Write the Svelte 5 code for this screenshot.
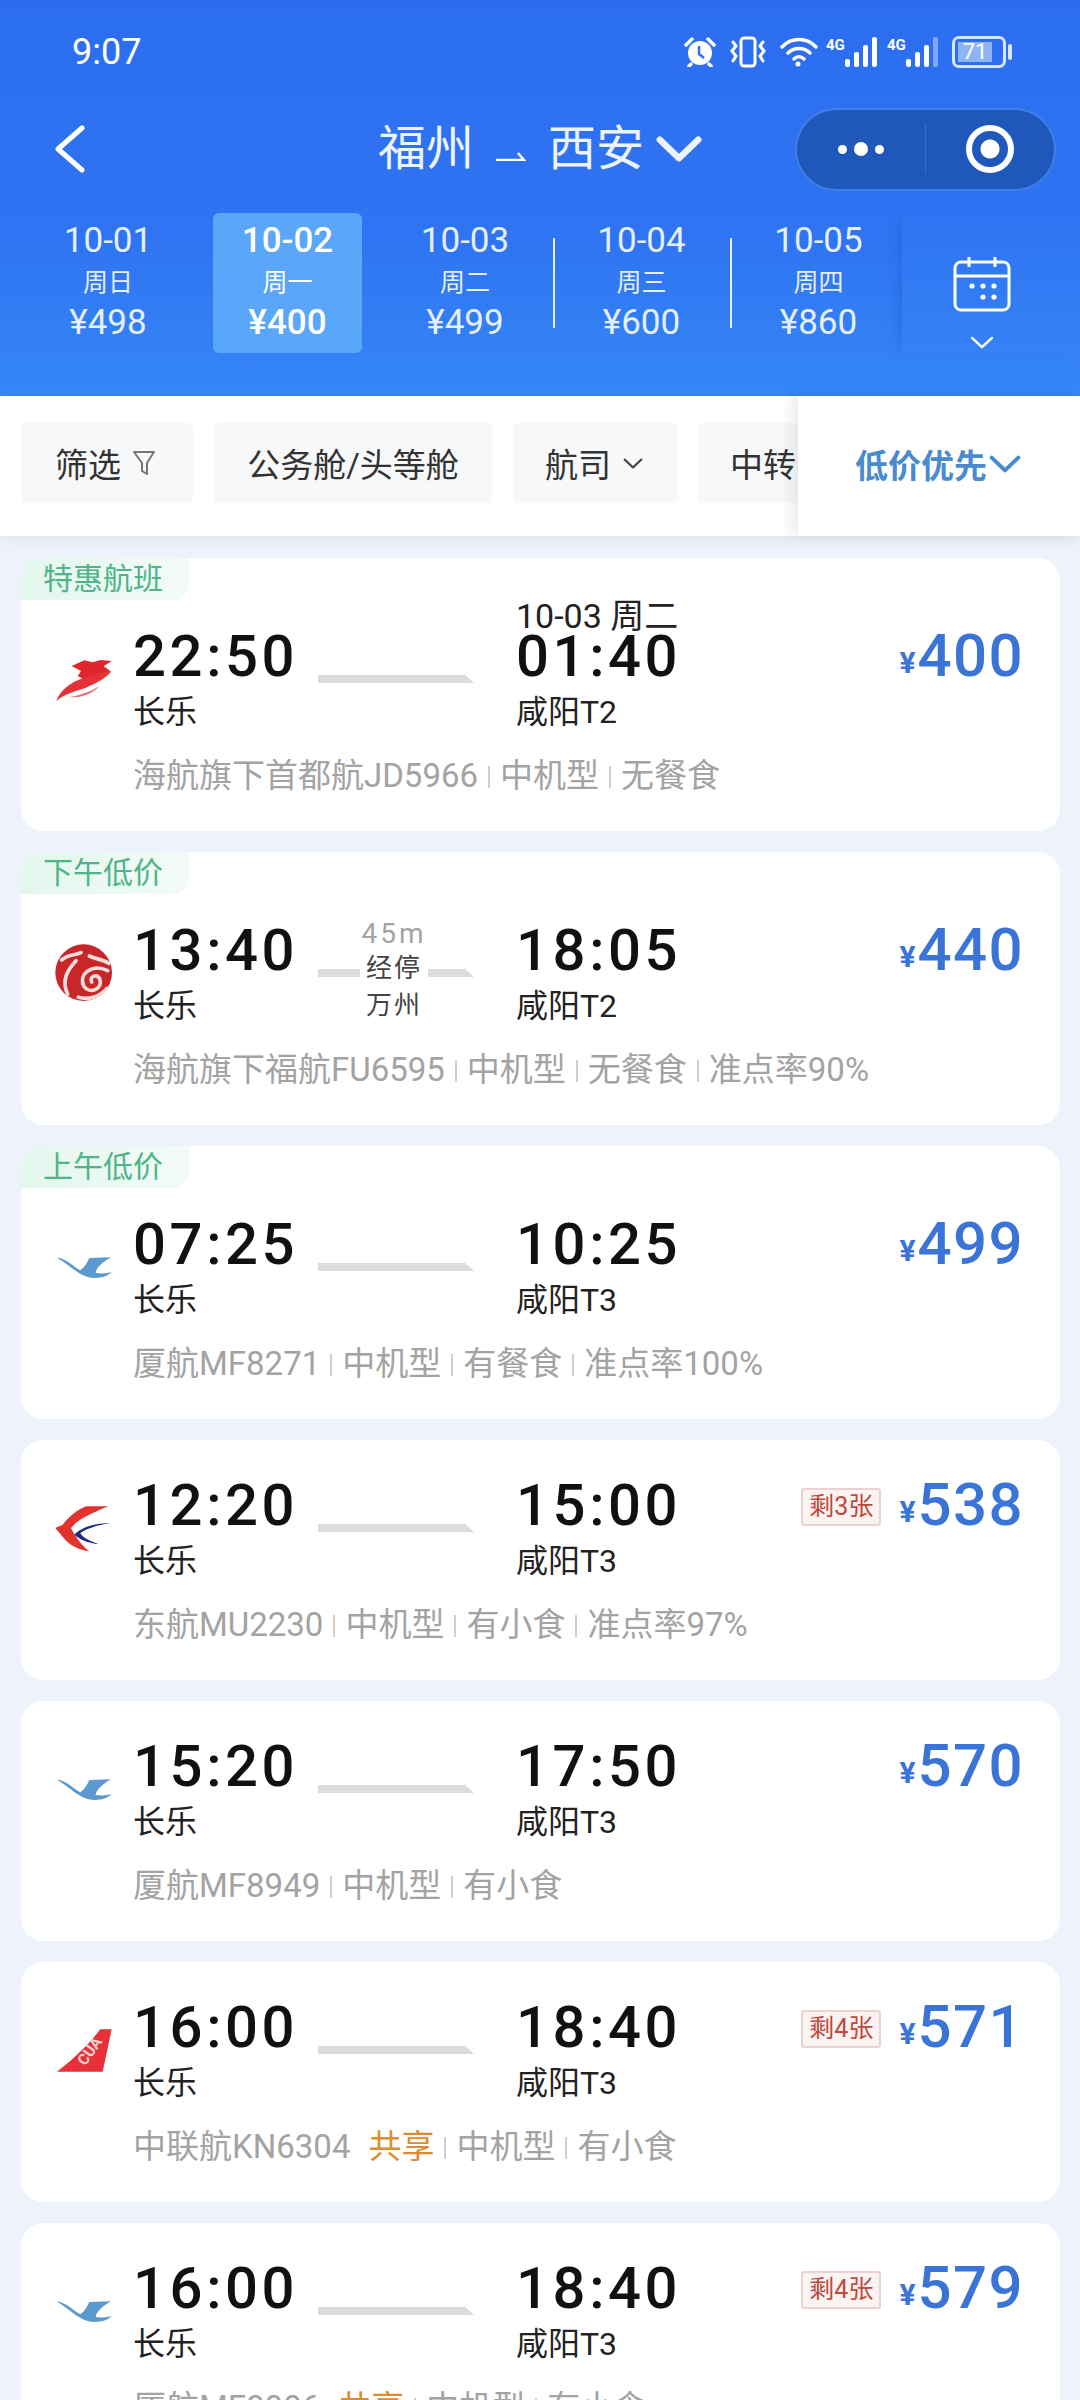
<script>
	const days = [
		{ date: "10-01", week: "周日", price: "¥498" },
		{ date: "10-02", week: "周一", price: "¥400", active: true },
		{ date: "10-03", week: "周二", price: "¥499", narrow: true },
		{ date: "10-04", week: "周三", price: "¥600", sep: true },
		{ date: "10-05", week: "周四", price: "¥860", sep: true }
	];

	const flights = [
		{ tag: "特惠航班", logo: "dragon", dep: "22:50", arr: "01:40", arrDate: "10-03 周二", to: "咸阳T2", price: 400, name: "海航旗下首都航JD5966", info: ["中机型", "无餐食"] },
		{ tag: "下午低价", logo: "fu", dep: "13:40", arr: "18:05", to: "咸阳T2", price: 440, stop: true, name: "海航旗下福航FU6595", info: ["中机型", "无餐食", "准点率90%"] },
		{ tag: "上午低价", logo: "xm", dep: "07:25", arr: "10:25", to: "咸阳T3", price: 499, name: "厦航MF8271", info: ["中机型", "有餐食", "准点率100%"] },
		{ logo: "east", dep: "12:20", arr: "15:00", to: "咸阳T3", price: 538, left: "剩3张", name: "东航MU2230", info: ["中机型", "有小食", "准点率97%"] },
		{ logo: "xm", dep: "15:20", arr: "17:50", to: "咸阳T3", price: 570, name: "厦航MF8949", info: ["中机型", "有小食"] },
		{ logo: "cua", dep: "16:00", arr: "18:40", to: "咸阳T3", price: 571, left: "剩4张", name: "中联航KN6304", shared: true, info: ["中机型", "有小食"] },
		{ logo: "xm", dep: "16:00", arr: "18:40", to: "咸阳T3", price: 579, left: "剩4张", name: "厦航MF8006", shared: true, info: ["中机型", "有小食"] }
	];
</script>

{#snippet chevron(w, h, sw)}
	<svg width={w} height={h} viewBox="0 0 24 14" preserveAspectRatio="none" fill="none" stroke="currentColor" stroke-width={sw} stroke-linecap="round" stroke-linejoin="round">
		<path d="M2 2 L12 12 L22 2" />
	</svg>
{/snippet}

{#snippet line()}
	<svg class="line" width="156" height="9" viewBox="0 0 156 9"><polygon points="0,1 146,1 146,0 156,9 0,9" fill="#dcdcdc" /></svg>
{/snippet}

{#snippet logo(kind)}
	{#if kind === "dragon"}
		<svg class="logo" width="60" height="60" viewBox="96 84 180 180">
			<path fill="#e0262c" d="M152 135 L190 118 L215 124 L240 117 L272 120 L248 136 L268 150 L228 170 L195 178 L170 165 L180 150 Z" />
			<path fill="#e53238" d="M106 240 C125 190 180 165 272 150 C250 178 215 190 195 200 C165 210 130 218 106 240 Z" />
			<path fill="#ee6a6c" d="M145 228 C175 224 205 214 235 195 C215 218 180 232 145 228 Z" />
		</svg>
	{:else if kind === "fu"}
		<svg class="logo" width="60" height="60" viewBox="96 69 180 180">
			<circle cx="188" cy="158" r="85" fill="#c9262a" />
			<g fill="none" stroke="#f9ddd8" stroke-width="11" stroke-linecap="round">
				<path d="M122 120 C145 100 160 108 180 98" />
				<path d="M165 122 C140 150 120 180 140 222" />
				<path d="M205 108 C225 118 245 118 264 130" />
				<path d="M260 152 C215 130 172 160 188 198 C205 224 248 208 236 176 C226 160 204 170 212 186" />
				<path d="M172 232 C200 240 235 232 258 205" />
			</g>
		</svg>
	{:else if kind === "xm"}
		<svg class="logo" width="60" height="60" viewBox="96 20 180 180">
			<path fill="#5a9ad0" d="M108 82 C130 82 150 102 178 120 C190 112 198 98 205 83 L270 81 C245 95 225 113 224 128 C240 130 255 130 272 126 C255 142 225 147 200 140 C170 132 140 100 108 82 Z" />
		</svg>
	{:else if kind === "east"}
		<svg class="logo" width="60" height="60" viewBox="96 50 180 180">
			<path fill="#e1332d" d="M195 75 L262 75 C215 95 175 110 150 140 C165 170 185 195 205 210 C175 205 150 195 130 172 L103 140 L125 130 C145 105 170 85 195 75 Z" />
			<path fill="#1d2a86" d="M270 125 C225 125 185 135 160 160 C180 178 205 185 232 188 C205 178 185 170 178 155 C200 140 235 130 270 125 Z" />
		</svg>
	{:else}
		<svg class="logo" width="60" height="60" viewBox="96 30 180 180">
			<path fill="#e8303a" d="M238 58 L272 58 L245 185 L108 185 C140 160 190 120 238 58 Z" />
			<text x="208" y="138" transform="rotate(-55 208 125)" text-anchor="middle" font-size="46" font-weight="700" font-family="Roboto, sans-serif" fill="#fbd5d5">CUA</text>
		</svg>
	{/if}
{/snippet}

<div class="page">
	<header>
		<div class="status">
			<span class="clock">9:07</span>
			<div class="status-icons">
				<svg width="32" height="30" viewBox="0 0 32 30">
					<circle cx="16" cy="16" r="12" fill="#fff" />
					<path d="M2 8 L8 2 M30 8 L24 2 M7 27 L5 29 M25 27 L27 29" stroke="#fff" stroke-width="3.5" stroke-linecap="round" />
					<path d="M15 9 V17 L20 21" stroke="#2d6ff0" stroke-width="2.5" fill="none" />
				</svg>
				<svg class="vib" width="40" height="32" viewBox="0 0 38 32" fill="none" stroke="#fff" stroke-width="3" stroke-linecap="round">
					<rect x="12" y="2" width="14" height="28" rx="3" />
					<path d="M4 6 L7 10 L3 15 L7 20 L4 25 M34 6 L31 10 L35 15 L31 20 L34 25" />
				</svg>
				<svg class="wifi" width="38" height="32" viewBox="0 0 38 32" fill="none" stroke="#fff" stroke-width="3.4" stroke-linecap="round">
					<path d="M2 11 C11 1 27 1 36 11 M8 17 C14 11 24 11 30 17 M14 23 C17 20 21 20 24 23" />
					<circle cx="18" cy="28" r="2.5" fill="#fff" stroke="none" />
				</svg>
				<div class="signal">
					<span class="g4">4G</span>
					<svg width="34" height="32" viewBox="0 0 34 32" fill="#fff"><rect x="0" y="23" width="5" height="8" rx="2" /><rect x="9" y="16" width="5" height="15" rx="2" /><rect x="18" y="9" width="5" height="22" rx="2" /><rect x="27" y="1" width="5" height="30" rx="2" /></svg>
				</div>
				<div class="signal">
					<span class="g4">4G</span>
					<svg width="34" height="32" viewBox="0 0 34 32" fill="#fff"><rect x="0" y="23" width="5" height="8" rx="2" /><rect x="9" y="16" width="5" height="15" rx="2" /><rect x="18" y="9" width="5" height="22" rx="2" /><rect x="27" y="1" width="5" height="30" rx="2" opacity=".4" /></svg>
				</div>
				<div class="battery"><span class="level">71</span></div>
				<span class="tip"></span>
			</div>
		</div>

		<nav>
			<svg class="back" width="34" height="48" viewBox="0 0 34 48" fill="none" stroke="#fff" stroke-width="5" stroke-linecap="round" stroke-linejoin="round"><path d="M29 3 L5 24 L29 45" /></svg>
			<div class="title">
				<span>福州</span>
				<svg class="arrow" width="30" height="10" viewBox="0 0 30 10" fill="none" stroke="#fff" stroke-width="2.5"><path d="M0 9 H28 L22 2" /></svg>
				<span>西安</span>
				<span class="title-chev">{@render chevron(46, 26, 3.4)}</span>
			</div>
			<div class="capsule">
				<div class="dots"><i></i><i class="big"></i><i></i></div>
				<span class="divider"></span>
				<div class="target"><i></i></div>
			</div>
		</nav>

		<div class="dates">
			<div class="days">
				{#each days as d}
					<div class="day" class:active={d.active} class:sep={d.sep} class:narrow={d.narrow}>
						<span class="d">{d.date}</span>
						<span class="w">{d.week}</span>
						<span class="d">{d.price}</span>
					</div>
				{/each}
			</div>
			<div class="cal">
				<svg width="58" height="56" viewBox="0 0 58 56" fill="none" stroke="#fff" stroke-width="3">
					<rect x="2" y="6" width="54" height="48" rx="6" />
					<path d="M2 20 H56 M16 1 V11 M42 1 V11" />
					<g fill="#fff" stroke="none">
						<circle cx="19" cy="30" r="2.6" /><circle cx="30" cy="30" r="2.6" /><circle cx="41" cy="30" r="2.6" />
						<circle cx="30" cy="41" r="2.6" /><circle cx="41" cy="41" r="2.6" />
					</g>
				</svg>
				<span class="cal-chev">{@render chevron(24, 13, 2.4)}</span>
			</div>
		</div>
	</header>

	<div class="filters">
		<div class="chips">
			<div class="chip first">筛选
				<svg width="22" height="26" viewBox="0 0 22 26" fill="none" stroke="#777" stroke-width="2" stroke-linejoin="round"><path d="M1 2 H21 L14 13 V24 L9 21 V13 Z" /></svg>
			</div>
			<div class="chip wide">公务舱/头等舱</div>
			<div class="chip airline">航司 <span class="chip-chev">{@render chevron(20, 11, 2.6)}</span></div>
			<div class="chip">中转</div>
		</div>
		<div class="sort">低价优先 <span class="sort-chev">{@render chevron(32, 18, 3)}</span></div>
	</div>

	<main>
		{#each flights as f}
			<section class="card" class:tagged={f.tag}>
				{#if f.tag}<div class="tag">{f.tag}</div>{/if}
				<div class="row">
					{@render logo(f.logo)}
					<div class="dep">
						<div class="time">{f.dep}</div>
						<div class="port">长乐</div>
					</div>
					<div class="mid">
						{#if f.stop}
							<svg class="line" width="42" height="9"><rect y="1" width="42" height="8" fill="#dcdcdc" /></svg>
							<div class="via">
								<span class="dur">45m</span>
								<span>经停</span>
								<span>万州</span>
							</div>
							<svg class="line" width="46" height="9" viewBox="0 0 46 9"><polygon points="0,1 36,1 36,0 46,9 0,9" fill="#dcdcdc" /></svg>
						{:else}
							{@render line()}
						{/if}
					</div>
					<div class="arr">
						{#if f.arrDate}<div class="next-day">{f.arrDate}</div>{/if}
						<div class="time">{f.arr}</div>
						<div class="port">{f.to}</div>
					</div>
					{#if f.left}<div class="left">{f.left}</div>{/if}
					<div class="price"><small>¥</small>{f.price}</div>
				</div>
				<div class="meta">
					<span>{f.name}</span>
					{#if f.shared}<span class="shared">共享</span>{/if}
					{#each f.info as item}
						<i class="bar"></i><span>{item}</span>
					{/each}
				</div>
			</section>
		{/each}
	</main>
</div>

<style>
	:global(body) {
		margin: 0;
		background: #edf2fb;
	}

	.page {
		width: 1080px;
		height: 2400px;
		overflow: hidden;
		font-family: Roboto, "Noto Sans CJK SC", sans-serif;
		background: #edf2fb;
	}

	header {
		height: 396px;
		background: linear-gradient(#2c6df0, #2f74f2 60%, #3586f6);
		color: #fff;
	}

	.status {
		height: 104px;
		display: flex;
		align-items: center;
		padding: 0 68px 0 72px;
	}

	.clock {
		font-size: 36px;
	}

	.status-icons {
		margin-left: auto;
		display: flex;
		align-items: center;
	}

	.vib {
		margin-left: 12px;
	}

	.wifi {
		margin-left: 12px;
	}

	.signal {
		display: flex;
		align-items: flex-start;
		margin-left: 8px;
		height: 32px;
	}

	.g4 {
		font-size: 15px;
		line-height: 18px;
		font-weight: 700;
		width: 19px;
	}

	.battery {
		margin-left: 12px;
		width: 54px;
		height: 32px;
		box-sizing: border-box;
		border: 3px solid #d6e6ff;
		border-radius: 7px;
		padding: 3px;
	}

	.level {
		display: block;
		width: 34px;
		height: 20px;
		background: #8fb4f5;
		font-size: 22px;
		line-height: 20px;
		text-align: center;
	}

	.tip {
		width: 4px;
		height: 16px;
		margin-left: 2px;
		border-radius: 2px;
		background: #d6e6ff;
	}

	nav {
		height: 90px;
		display: flex;
		align-items: center;
	}

	.back {
		margin-left: 53px;
	}

	.title {
		margin-left: 291px;
		display: flex;
		align-items: center;
		font-size: 48px;
		line-height: 60px;
		color: #eef4ff;
	}

	.arrow {
		margin: 14px 22px 0 22px;
	}

	.title-chev {
		display: flex;
		margin-left: 12px;
	}

	.capsule {
		margin-left: auto;
		margin-right: 24px;
		width: 261px;
		height: 83px;
		box-sizing: border-box;
		border: 2px solid #3f7fe8;
		border-radius: 42px;
		background: #1f58ba;
		display: flex;
		align-items: center;
	}

	.dots {
		width: 128px;
		display: flex;
		justify-content: center;
		align-items: center;
		gap: 7px;
	}

	.dots i {
		width: 9px;
		height: 9px;
		border-radius: 50%;
		background: #fff;
	}

	.dots i.big {
		width: 14px;
		height: 14px;
	}

	.divider {
		width: 1px;
		height: 50px;
		background: #3a70cc;
	}

	.target {
		flex: 1;
		display: flex;
		justify-content: center;
	}

	.target i {
		width: 48px;
		height: 48px;
		box-sizing: border-box;
		border: 6px solid #fff;
		border-radius: 50%;
		display: flex;
		background: radial-gradient(circle, #fff 0 9px, transparent 10px);
	}

	.dates {
		margin-top: 19px;
		height: 140px;
		display: flex;
	}

	.days {
		width: 902px;
		box-sizing: border-box;
		padding-left: 19px;
		display: flex;
		overflow: hidden;
	}

	.day {
		width: 178px;
		flex: none;
		display: flex;
		flex-direction: column;
		align-items: center;
		color: #e6efff;
		padding-top: 8px;
		box-sizing: border-box;
	}

	.day.narrow {
		width: 176px;
	}

	.day.sep {
		width: 177px;
		background: linear-gradient(#e6efff, #e6efff) left 0 center / 2px 90px no-repeat;
	}

	.day.active {
		width: 149px;
		margin: 0 15px 0 16px;
		background: #5aa6f8;
		border-radius: 6px;
		color: #fff;
	}

	.d {
		font-size: 35px;
		line-height: 40px;
		font-weight: 400;
	}

	.active .d {
		font-weight: 500;
	}

	.w {
		font-size: 25px;
		line-height: 41px;
		padding-top: 1px;
	}

	.cal {
		flex: 1;
		background: linear-gradient(#2f73f2, #3482f5);
		box-shadow: -10px 0 12px -8px rgba(25, 70, 170, 0.3);
		display: flex;
		flex-direction: column;
		align-items: center;
		padding: 43px 18px 0 0;
		box-sizing: border-box;
		height: 140px;
	}

	.cal-chev {
		display: flex;
		margin-top: 24px;
	}

	.filters {
		height: 140px;
		background: #fff;
		display: flex;
		box-shadow: 0 6px 14px rgba(60, 80, 130, 0.06);
		position: relative;
	}

	.chips {
		width: 798px;
		padding: 27px 0 0 21px;
		box-sizing: border-box;
		display: flex;
		gap: 21px;
		overflow: hidden;
	}

	.chip {
		flex: none;
		height: 80px;
		box-sizing: border-box;
		padding: 0 32px;
		background: #f7f8f9;
		display: flex;
		align-items: center;
		font-size: 33px;
		color: #333;
		border-radius: 4px;
	}

	.chip.first {
		width: 172px;
		padding-left: 34px;
		gap: 12px;
	}

	.chip.wide {
		width: 278px;
		justify-content: center;
		padding: 0;
	}

	.chip.airline {
		width: 164px;
	}

	.chip-chev {
		display: flex;
		color: #444;
		margin-left: 12px;
	}

	.sort {
		flex: 1;
		box-shadow: -8px 0 12px rgba(0, 0, 0, 0.07);
		padding: 0 0 4px 57px;
		display: flex;
		align-items: center;
		font-size: 33px;
		font-weight: 700;
		color: #4a8bd0;
		background: #fff;
	}

	.sort-chev {
		display: flex;
		margin-left: 2px;
	}

	main {
		padding: 22px 20px 0 21px;
		display: flex;
		flex-direction: column;
		gap: 21px;
	}

	.card {
		background: #fff;
		border-radius: 22px;
		padding: 44px 36px 40px 32px;
		box-sizing: border-box;
		height: 240px;
		flex: none;
	}

	.card.tagged {
		padding-top: 0;
		height: 273px;
	}

	.tag {
		width: 168px;
		height: 42px;
		margin: 0 0 35px -32px;
		box-sizing: border-box;
		padding: 1px 0 0 22px;
		font-size: 30px;
		line-height: 40px;
		color: #4fb38b;
		background: linear-gradient(90deg, #e3f7ee, #f3fbf7);
		border-radius: 22px 0 16px 0;
	}

	.row {
		display: flex;
		align-items: flex-start;
		height: 80px;
	}

	.logo {
		flex: none;
		width: 60px;
		margin: 14px 20px 0 0;
	}

	.dep {
		width: 185px;
		flex: none;
	}

	.time {
		font-size: 58px;
		line-height: 42px;
		font-weight: 500;
		letter-spacing: 3.6px;
		color: #111;
	}

	.port {
		margin-top: 19px;
		font-size: 32px;
		line-height: 32px;
		color: #222;
	}

	.mid {
		width: 198px;
		flex: none;
		display: flex;
		align-items: flex-start;
	}

	.line {
		display: block;
		flex: none;
		margin-top: 39px;
	}

	.via {
		width: 68px;
		flex: none;
		margin-top: -11px;
		display: flex;
		flex-direction: column;
		align-items: center;
		font-size: 26px;
		line-height: 37px;
		letter-spacing: 2px;
		color: #444;
	}

	.dur {
		font-size: 28px;
		line-height: 32px;
		color: #a3a3a3;
		letter-spacing: 3px;
	}

	.arr {
		flex: 1;
	}

	.next-day {
		height: 34px;
		margin-top: -34px;
		font-size: 34px;
		line-height: 30px;
		color: #222;
		white-space: nowrap;
	}

	.left {
		flex: none;
		width: 80px;
		height: 38px;
		box-sizing: border-box;
		margin: 4px 18px 0 0;
		border: 2px solid #ead2d0;
		background: #fbf3f2;
		border-radius: 3px;
		color: #c0483c;
		font-size: 25px;
		line-height: 33px;
		text-align: center;
	}

	.price {
		font-size: 60px;
		line-height: 42px;
		font-weight: 500;
		letter-spacing: 1.4px;
		color: #3a74d6;
		display: flex;
		align-items: flex-end;
	}

	.price small {
		font-size: 30px;
		line-height: 28px;
		font-weight: 700;
		margin-right: 2px;
		letter-spacing: 0;
	}

	.meta {
		margin: 44px 0 0 80px;
		display: flex;
		align-items: center;
		font-size: 33px;
		line-height: 34px;
		color: #a3a3a3;
		white-space: nowrap;
	}

	.shared {
		color: #e08c2e;
		margin-left: 18px;
	}

	.bar {
		width: 2px;
		height: 22px;
		background: #cfcfcf;
		margin: 2px 10px 0;
	}
</style>
